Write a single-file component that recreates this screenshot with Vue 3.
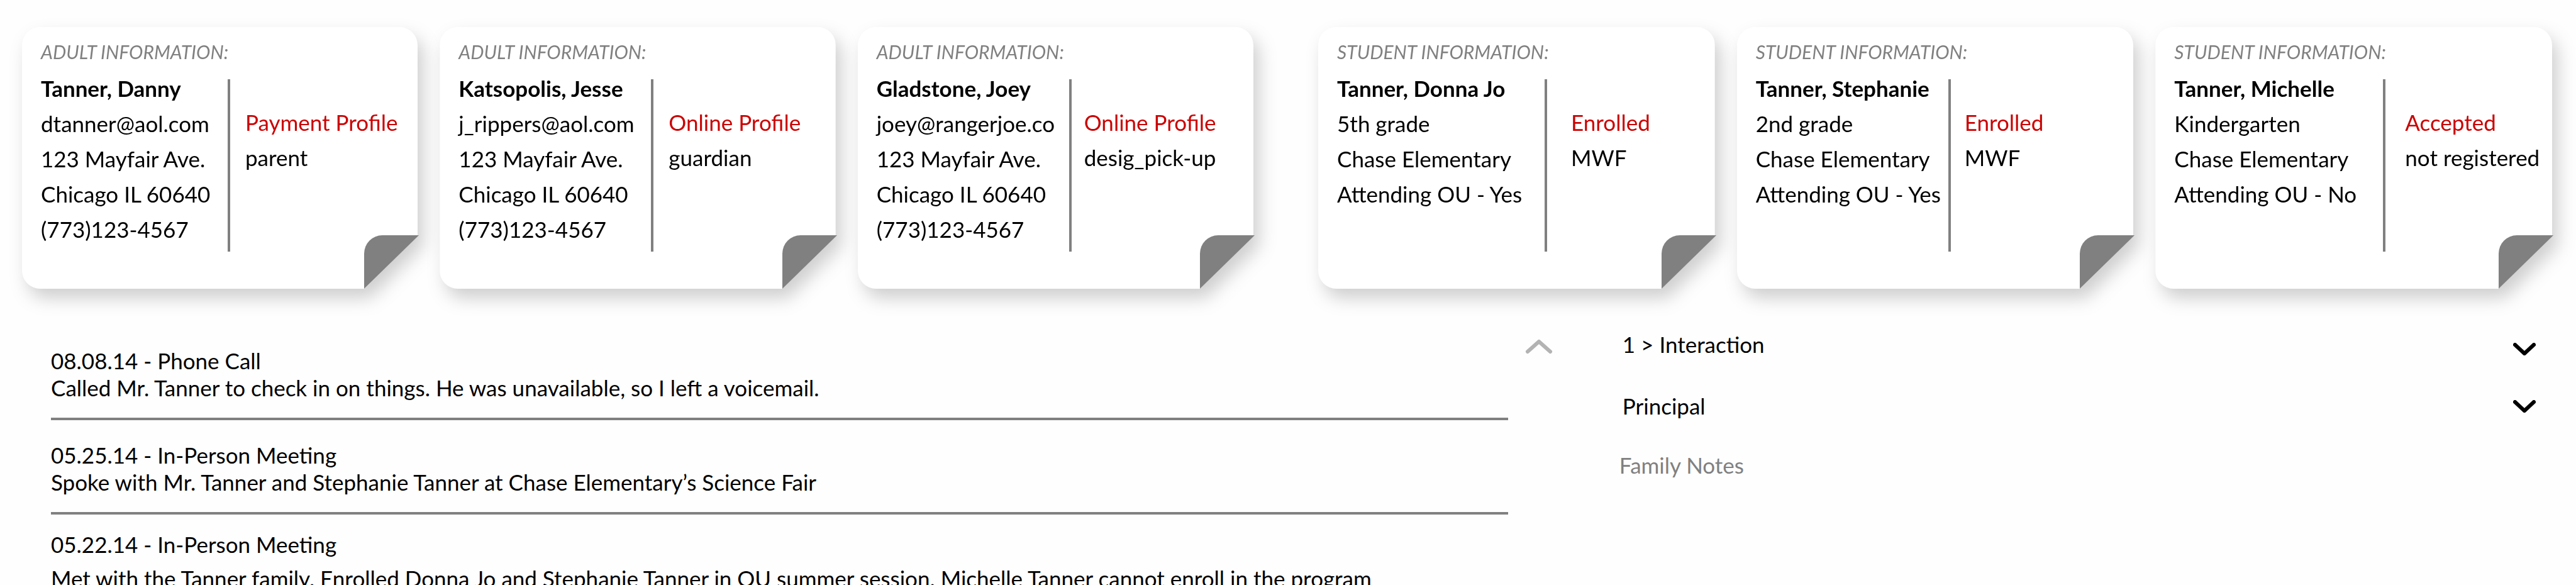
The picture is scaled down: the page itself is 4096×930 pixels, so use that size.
<script setup>
import { ref } from 'vue'

const groups = [
  {
    heading: 'Adult information:',
    people: [
      { name: 'Tanner, Danny', lines: ['dtanner@aol.com', '123 Mayfair Ave.', 'Chicago IL 60640', '(773)123-4567'], status: 'Payment Profile', detail: 'parent', split: 297, inset: 24 },
      { name: 'Katsopolis, Jesse', lines: ['j_rippers@aol.com', '123 Mayfair Ave.', 'Chicago IL 60640', '(773)123-4567'], status: 'Online Profile', detail: 'guardian', split: 306, inset: 24 },
      { name: 'Gladstone, Joey', lines: ['joey@rangerjoe.co', '123 Mayfair Ave.', 'Chicago IL 60640', '(773)123-4567'], status: 'Online Profile', detail: 'desig_pick-up', split: 306, inset: 20 }
    ]
  },
  {
    heading: 'Student information:',
    people: [
      { name: 'Tanner, Donna Jo', lines: ['5th grade', 'Chase Elementary', 'Attending OU - Yes'], status: 'Enrolled', detail: 'MWF', split: 330, inset: 38 },
      { name: 'Tanner, Stephanie', lines: ['2nd grade', 'Chase Elementary', 'Attending OU - Yes'], status: 'Enrolled', detail: 'MWF', split: 306, inset: 22 },
      { name: 'Tanner, Michelle', lines: ['Kindergarten', 'Chase Elementary', 'Attending OU - No'], status: 'Accepted', detail: 'not registered', split: 332, inset: 31 }
    ]
  }
]

const entries = [
  { title: '08.08.14 - Phone Call', body: 'Called Mr. Tanner to check in on things. He was unavailable, so I left a voicemail.' },
  { title: '05.25.14 - In-Person Meeting', body: 'Spoke with Mr. Tanner and Stephanie Tanner at Chase Elementary’s Science Fair' },
  { title: '05.22.14 - In-Person Meeting', body: 'Met with the Tanner family. Enrolled Donna Jo and Stephanie Tanner in OU summer session. Michelle Tanner cannot enroll in the program' }
]

const interaction = ref('1 > Interaction')
const role = ref('Principal')
const notes = ref('')
</script>

<template>
  <main class="page">
    <section class="people">
      <div v-for="group in groups" :key="group.heading" class="group">
        <article v-for="person in group.people" :key="person.name" class="card">
          <div class="sheet">
            <p class="kind">{{ group.heading }}</p>
            <div class="facts" :style="{ '--split': person.split + 'px', '--inset': person.inset + 'px' }">
              <div class="about">
                <h2 class="name">{{ person.name }}</h2>
                <p v-for="line in person.lines" :key="line">{{ line }}</p>
              </div>
              <div class="divider"></div>
              <div class="standing">
                <p class="status">{{ person.status }}</p>
                <p>{{ person.detail }}</p>
              </div>
            </div>
          </div>
          <svg class="fold" viewBox="0 0 87 85" aria-hidden="true"><path d="M0 85V29A29 29 0 0 1 29 0H87Z" fill="#808080" /></svg>
        </article>
      </div>
    </section>

    <section class="lower">
      <div class="log">
        <article v-for="entry in entries" :key="entry.title" class="entry">
          <h3>{{ entry.title }}</h3>
          <p>{{ entry.body }}</p>
        </article>
      </div>

      <button class="scroll-up" type="button" aria-label="Scroll up">
        <svg viewBox="0 0 44 24" width="44" height="24"><path d="M4 20L22 4L40 20" fill="none" stroke="#b3b3b3" stroke-width="6" stroke-linecap="round" stroke-linejoin="round" /></svg>
      </button>

      <form class="form" @submit.prevent>
        <div class="field interaction">
          <select v-model="interaction" aria-label="Interaction">
            <option>1 &gt; Interaction</option>
          </select>
          <svg class="arrow" viewBox="0 0 36 20" aria-hidden="true"><path d="M3 3L18 17L33 3" fill="none" stroke="#000" stroke-width="6" stroke-linecap="round" stroke-linejoin="round" /></svg>
        </div>
        <div class="field role">
          <select v-model="role" aria-label="Role">
            <option>Principal</option>
          </select>
          <svg class="arrow" viewBox="0 0 36 20" aria-hidden="true"><path d="M3 3L18 17L33 3" fill="none" stroke="#000" stroke-width="6" stroke-linecap="round" stroke-linejoin="round" /></svg>
        </div>
        <textarea v-model="notes" aria-label="Family Notes" placeholder="Family Notes" rows="3"></textarea>
      </form>
    </section>
  </main>
</template>

<style>
body {
  margin: 0;
  background: #fefefe;
}
</style>

<style scoped>
.page {
  height: 100vh;
  overflow: hidden;
  color: #000;
  font: 35px/56px Lato, "Open Sans", sans-serif;
}

p,
h2,
h3 {
  margin: 0;
  font-size: inherit;
  white-space: nowrap;
}

.people {
  display: grid;
  grid-template-columns: 499fr 500fr;
  gap: 103px;
  padding: 43px 38px 0 35px;
}

.group {
  display: grid;
  grid-template-columns: repeat(3, minmax(0, 1fr));
  gap: 35px;
}

.card {
  position: relative;
  filter: drop-shadow(9px 15px 14px rgba(0, 0, 0, 0.19));
}

.sheet {
  padding: 21px 0 59px 30px;
  border-radius: 29px;
  background: #fff;
  clip-path: polygon(0 0, 100% 0, 100% calc(100% - 84px), calc(100% - 85px) 100%, 0 100%);
}

.kind {
  margin-bottom: 12px;
  color: #808080;
  font-size: 30px;
  font-style: italic;
  line-height: 36px;
  text-transform: uppercase;
}

.facts {
  display: grid;
  grid-template-columns: var(--split) 4px 1fr;
  min-height: 288px;
}

.name {
  font-weight: 700;
}

.divider {
  margin-top: 14px;
  background: #808080;
}

.standing {
  padding: 54px 0 0 var(--inset);
}

.status {
  color: #cc0000;
}

.fold {
  position: absolute;
  right: -2px;
  bottom: 0;
  width: 87px;
  height: 85px;
}

.lower {
  display: flex;
  align-items: flex-start;
  padding: 67px 64px 0 81px;
}

.log {
  flex: 1.59 1 0;
  min-width: 0;
  padding-top: 26px;
  line-height: 43px;
}

.entry {
  padding-bottom: 26px;
  border-bottom: 4px solid #808080;
}

.entry + .entry {
  padding-top: 34px;
}

.entry:last-child {
  padding-top: 26px;
  border-bottom: 0;
}

.entry:last-child p {
  margin-top: 11px;
}

.entry h3 {
  font-weight: 400;
}

.scroll-up {
  flex: none;
  margin: 13px 0 0 27px;
  padding: 0;
  border: 0;
  background: none;
}

.scroll-up svg {
  display: block;
}

.form {
  flex: 1 1 0;
  min-width: 0;
  margin-left: 106px;
}

.field {
  position: relative;
  margin-bottom: 56px;
}

.role {
  margin-bottom: 52px;
}

.field select {
  display: block;
  width: 100%;
  height: 42px;
  padding: 0 60px 0 5px;
  border: 0;
  background: none;
  color: inherit;
  font: inherit;
  line-height: 42px;
  appearance: none;
}

.arrow {
  position: absolute;
  top: 12px;
  right: 0;
  width: 36px;
  height: 20px;
  pointer-events: none;
}

.interaction .arrow {
  top: 19px;
}

textarea {
  display: block;
  width: 100%;
  box-sizing: border-box;
  padding: 0;
  border: 0;
  background: none;
  color: inherit;
  font: inherit;
  line-height: 42px;
  resize: none;
}

textarea::placeholder {
  color: #808080;
  opacity: 1;
}
</style>
